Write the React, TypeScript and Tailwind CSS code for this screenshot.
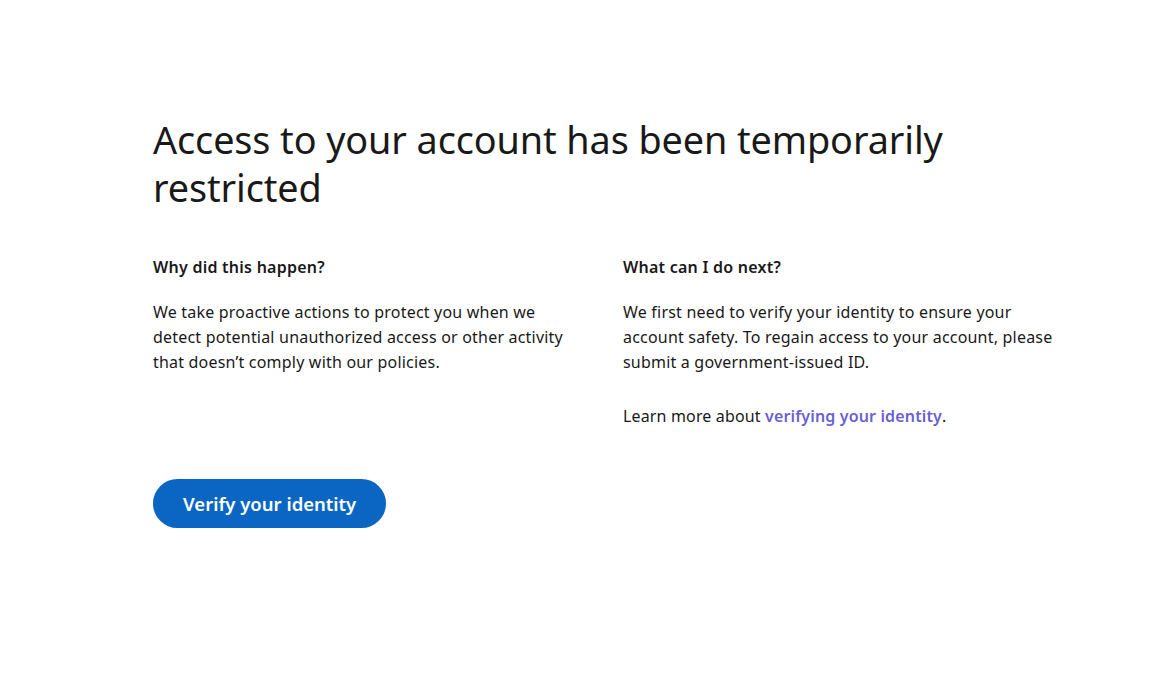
export default function App() {
  return (
    <div
      className="min-h-screen bg-white text-[#191919]"
      style={{ fontFamily: '"Noto Sans", "Open Sans", sans-serif' }}
    >
      <div className="pl-[153px] pt-[116px]">
        <h1 className="text-[37.8px] leading-[48px] font-normal tracking-[-0.1px]">
          Access to your account has been temporarily
          <br />
          restricted
        </h1>
        <div className="mt-[43px] grid grid-cols-[440px_440px] gap-x-[30px]">
          <div>
            <h2 className="text-[16px] leading-[24px] font-semibold tracking-[0.25px]">Why did this happen?</h2>
            <p className="mt-[21px] text-[16px] leading-[25px] tracking-[0.2px] whitespace-nowrap">
              We take proactive actions to protect you when we
              <br />
              detect potential unauthorized access or other activity
              <br />
              that doesn’t comply with our policies.
            </p>
          </div>
          <div>
            <h2 className="text-[16px] leading-[24px] font-semibold tracking-[0.25px]">What can I do next?</h2>
            <p className="mt-[21px] text-[16px] leading-[25px] tracking-[0.2px] whitespace-nowrap">
              We first need to verify your identity to ensure your
              <br />
              account safety. To regain access to your account, please
              <br />
              submit a government-issued ID.
            </p>
            <p className="mt-[29px] text-[16px] leading-[25px] tracking-[0.15px]">
              Learn more about{" "}
              <a href="#" className="font-semibold text-[#6a60d4]">
                verifying your identity
              </a>
              .
            </p>
          </div>
        </div>
        <button className="mt-[50px] h-[49px] rounded-full bg-[#0a66c2] px-[30px] text-[18.5px] font-semibold text-white">
          Verify your identity
        </button>
      </div>
    </div>
  );
}
